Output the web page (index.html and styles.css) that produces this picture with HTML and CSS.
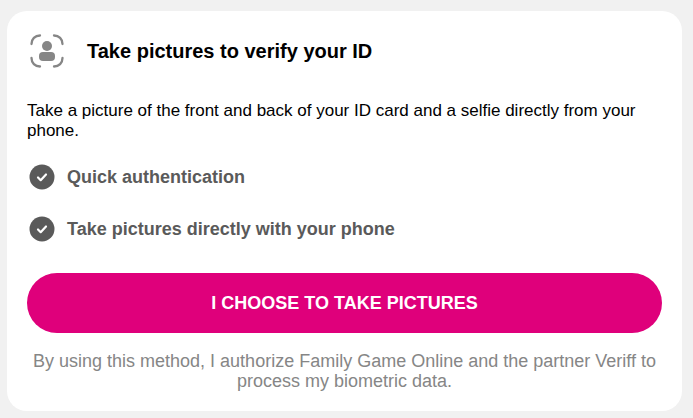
FILE: index.html
```html
<!DOCTYPE html>
<html lang="en">
<head>
    <meta charset="UTF-8">
    <meta name="viewport" content="width=device-width, initial-scale=1.0">
    <title>Verify your ID</title>
    <link rel="stylesheet" href="styles.css">
</head>
<body>
    <main class="card">
        <div class="card-header">
            <svg class="icon-scan" viewBox="0 0 40 40" aria-hidden="true">
                <g fill="none" stroke="#868686" stroke-width="2.3" stroke-linecap="round">
                    <path d="M4.500 13C4.500 8 8 4.500 13 4.500"/>
                    <path d="M27 4.500C32 4.500 35.500 8 35.500 13"/>
                    <path d="M35.500 27C35.500 32 32 35.500 27 35.500"/>
                    <path d="M13 35.500C8 35.500 4.500 32 4.500 27"/>
                </g>
                <circle cx="20" cy="15" r="5" fill="#868686"/>
                <rect x="12" y="21" width="16" height="9" rx="4" fill="#868686"/>
            </svg>
            <h1 class="title">Take pictures to verify your ID</h1>
        </div>
        <p class="description">Take a picture of the front and back of your ID card and a selfie directly from your phone.</p>
        <ul class="benefits">
            <li class="benefit">
                <svg class="icon-check" viewBox="0 0 26 26" aria-hidden="true">
                    <circle cx="13" cy="13" r="12.5" fill="#5a5a5a"/>
                    <path d="M9 13.500l2.700 2.700 5.300-5.700" fill="none" stroke="#fff" stroke-width="2.200" stroke-linecap="round" stroke-linejoin="round"/>
                </svg>
                Quick authentication
            </li>
            <li class="benefit">
                <svg class="icon-check" viewBox="0 0 26 26" aria-hidden="true">
                    <circle cx="13" cy="13" r="12.5" fill="#5a5a5a"/>
                    <path d="M9 13.500l2.700 2.700 5.300-5.700" fill="none" stroke="#fff" stroke-width="2.200" stroke-linecap="round" stroke-linejoin="round"/>
                </svg>
                Take pictures directly with your phone
            </li>
        </ul>
        <button class="btn" type="button">I choose to take pictures</button>
        <p class="legal">By using this method, I authorize Family Game Online and the partner Veriff to process my biometric data.</p>
    </main>
</body>
</html>
```
FILE: styles.css
```css
body{
    margin: 0;
    padding: 11px 11px 7px 7px;
    background: #f1f1f1;
    font-family: "Liberation Sans", Arial, sans-serif;
    font-size: 18px;
    line-height: 20px;
    color: #000;
}

.card{
    padding: 20px;
    border-radius: 20px;
    background: #fff;
}

.card-header{
    display: flex;
    align-items: center;
    gap: 20px;
}

.icon-scan{
    width: 40px;
    height: 40px;
}

.title{
    margin: 0;
    font-size: 20px;
}

.description{
    margin: 30px 0 10px;
    font-size: 17px;
}

.benefits{
    margin: 0;
    padding: 0;
    list-style: none;
}

.benefit{
    display: flex;
    align-items: center;
    gap: 12px;
    height: 52px;
    padding-left: 2px;
    font-weight: bold;
    color: #5a5a5a;
}

.icon-check{
    width: 26px;
    height: 26px;
}

.btn{
    width: 100%;
    height: 60px;
    margin: 18px 0;
    border: none;
    border-radius: 30px;
    background: #df007b;
    color: #fff;
    font-family: inherit;
    font-size: 18px;
    font-weight: bold;
    text-transform: uppercase;
    cursor: pointer;
}

.legal{
    margin: 0;
    text-align: center;
    color: #868686;
}
```
